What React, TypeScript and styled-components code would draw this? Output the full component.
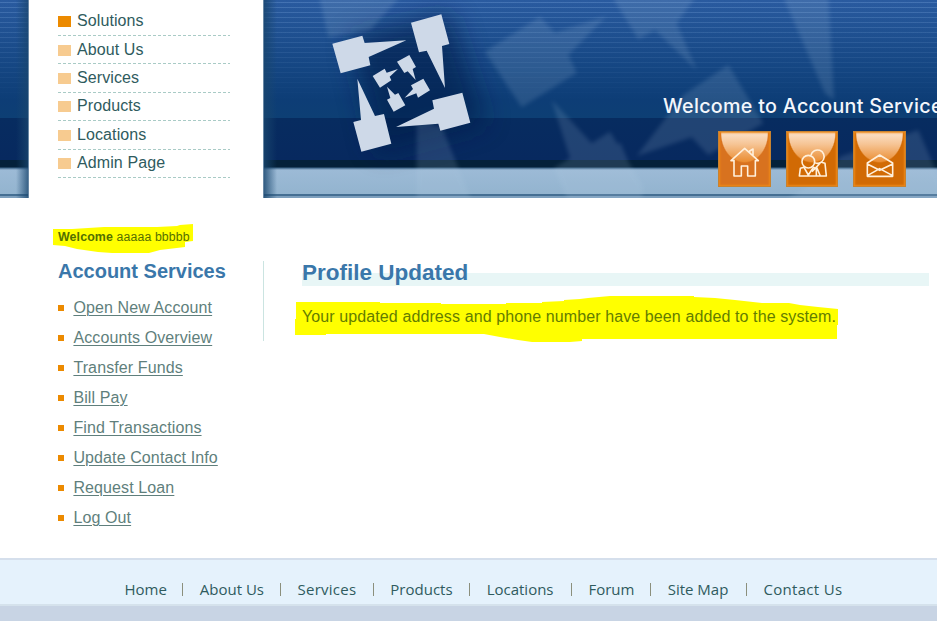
import React from "react";
import styled, { createGlobalStyle } from "styled-components";

const GlobalStyle = createGlobalStyle`
  body {
    margin: 0;
    background: #fff;
    font-family: "Liberation Sans", Arial, sans-serif;
    font-size: 16px;
    overflow: hidden;
  }
`;

const Page = styled.div`
  width: 937px;
  height: 621px;
  display: flex;
  flex-direction: column;
  overflow: hidden;
`;

const Header = styled.header`
  height: 198px;
  flex: none;
  display: grid;
  grid-template-columns: 29px 234px 1fr;
  background:
    linear-gradient(transparent 160px, #04213a 160px, #04213a 167px, #40688c 168px, #9cbad6 170px,
      #93b4cf 194px, #456f93 194px, #456f93 196px, #7d9fbd 196px, #7d9fbd 198px),
    linear-gradient(transparent 118px, #072c60 118px, #07295f 160px, transparent 160px),
    linear-gradient(rgba(13, 61, 118, 0), #0d3d76 100px, #0d3f74 118px, transparent 118px),
    repeating-linear-gradient(transparent 0 2px, rgba(150, 190, 240, 0.25) 2px 3px, transparent 3px 5px),
    linear-gradient(#2a5ba0, #215698 118px);
`;

const Edge = styled.div`
  background: linear-gradient(to right, transparent 16px, rgba(25, 70, 110, 0.75) 28px, #6988a5 28px);
`;

const NavPanel = styled.nav`
  background: #fff;
  padding: 7.6px 33px 0 29px;
`;

const NavItem = styled.a`
  display: flex;
  align-items: center;
  gap: 6px;
  box-sizing: border-box;
  height: 28.4px;
  padding-bottom: 1px;
  letter-spacing: 0.1px;
  color: #2f5b5e;
  background: repeating-linear-gradient(to right, #a9cbc6 0 3px, transparent 3px 5px) bottom / 100% 1px no-repeat;
`;

const NavBullet = styled.span<{ $active?: boolean }>`
  width: 13px;
  height: 11px;
  margin-top: 1px;
  background: ${(p) => (p.$active ? "#ec8a00" : "#f7cb90")};
`;

const Banner = styled.section`
  position: relative;
  display: flex;
  flex-direction: column;
  padding: 93px 0 0 400px;
  overflow: hidden;
  background: linear-gradient(to right, #6988a5 1px, rgba(25, 70, 110, 0.8) 1px, transparent 14px);
`;

const BannerArt = styled.svg`
  position: absolute;
  inset: 0;
`;

const BannerTitle = styled.div`
  position: relative;
  height: 38px;
  font: 500 19.7px/26px Inter, sans-serif;
  letter-spacing: 0.3px;
  color: #f4f7fc;
  white-space: nowrap;
`;

const Tiles = styled.div`
  position: relative;
  display: flex;
  gap: 15px;
  padding-left: 55px;
`;

const Tile = styled.a<{ $warm?: boolean; $narrow?: boolean }>`
  width: ${(p) => (p.$narrow ? 52 : 53)}px;
  height: 56px;
  box-sizing: border-box;
  border: 1px solid #c8822f;
  overflow: hidden;
  background:
    radial-gradient(ellipse 24px 30px at 50% 1px, transparent 95%, ${(p) => (p.$warm ? "#d8721f" : "#d16a04")} 100%),
    linear-gradient(#fbe3cc, #f6c596 12px, #ea8c30 30px);
  box-shadow: inset 0 0 2px 1px #ee8818;

  svg {
    display: block;
  }
`;

const Body = styled.div`
  height: 360px;
  flex: none;
  display: grid;
  grid-template-columns: 263px 1fr;
`;

const Sidebar = styled.aside`
  padding: 29px 0 0 58px;
`;

const Marker = styled.svg`
  position: absolute;
  z-index: -1;
`;

const Greeting = styled.p`
  position: relative;
  z-index: 0;
  margin: 0;
  height: 32px;
  font-size: 12.3px;
  letter-spacing: 0.12px;
  line-height: 20px;
  color: #566f00;
  white-space: nowrap;

  b {
    color: #537000;
    font-size: 12.4px;
  }
  ${Marker} {
    left: -6px;
    top: -3px;
  }
`;

const SideHeading = styled.h2`
  margin: 0;
  font-size: 20px;
  line-height: 24px;
  height: 34px;
  color: #3a77aa;
`;

const ServiceItem = styled.div`
  display: flex;
  align-items: center;
  height: 30px;
  gap: 9.4px;
`;

const ServiceBullet = styled.span`
  width: 6px;
  height: 6px;
  margin-bottom: 1px;
  background: #ec8a00;
`;

const ServiceLink = styled.a`
  color: #5f7f7c;
  letter-spacing: 0.11px;
  text-decoration: underline;
  text-underline-offset: 2px;
  text-decoration-thickness: 1px;
`;

const Main = styled.main`
  padding: 63px 8px 0 0;
  display: grid;
  grid-template-columns: 39px 1fr;
  align-items: start;
`;

const Divider = styled.div`
  width: 1px;
  height: 80px;
  background: #cbe4e1;
`;

const Title = styled.h1`
  margin: 0;
  height: 41px;
  font-size: 22.5px;
  line-height: 23px;
  color: #3a77aa;
  background: linear-gradient(#e8f6f6, #e8f6f6) 0 12px / 100% 13px no-repeat;
`;

const Message = styled.p`
  position: relative;
  z-index: 0;
  margin: 0;
  line-height: 30px;
  letter-spacing: 0.105px;
  color: #647d00;
  white-space: nowrap;

  ${Marker} {
    left: -7px;
    top: -7px;
  }
`;

const Footer = styled.footer`
  flex: 1;
  box-sizing: border-box;
  border-top: 2px solid #d5dfec;
  background: linear-gradient(#e5f2fc 44px, #d5e2ec 44px, #d5e2ec 46px, #c8d4e4 46px);
`;

const FooterNav = styled.nav`
  display: flex;
  align-items: center;
  gap: 16.4px;
  height: 22px;
  padding: 18px 0 0 124.5px;
  font: 15px/22px "Open Sans", sans-serif;
  color: #2f5b5e;
`;

const FooterLink = styled.a<{ $width: number }>`
  flex: none;
  width: ${(p) => p.$width}px;
  letter-spacing: ${(p) => (p.$width > 75 ? 0.3 : p.$width === 59 ? 0.25 : 0)}px;
  white-space: nowrap;
`;

const FooterBar = styled.span`
  width: 1px;
  height: 13px;
  margin-top: 1px;
  background: #8b8f7c;
`;

const navItems = ["Solutions", "About Us", "Services", "Products", "Locations", "Admin Page"];
const services = [
  "Open New Account",
  "Accounts Overview",
  "Transfer Funds",
  "Bill Pay",
  "Find Transactions",
  "Update Contact Info",
  "Request Loan",
  "Log Out",
];
const footerItems: [string, number][] = [
  ["Home", 41.5],
  ["About Us", 64],
  ["Services", 59],
  ["Products", 62.5],
  ["Locations", 68],
  ["Forum", 45.5],
  ["Site Map", 62],
  ["Contact Us", 79],
];

const emblem = [
  "217,131 307,107 314,129 439,121 326,171 331,196 242,220",
  "453,68 544,43 568,132 546,138 555,264 500,152 477,157",
  "517,301 607,278 631,368 541,392 535,371 408,381 522,326",
  "292,236 345,348 372,342 394,431 304,455 280,366 303,360",
  "338,228 374,206 380,218 414,207 389,230 394,241 360,263",
  "411,185 448,165 468,201 458,207 467,240 443,214 433,219",
  "453,256 490,236 510,271 474,293 469,280 434,293 459,267",
  "381,260 405,284 415,279 436,316 401,335 381,299 391,294",
];

const ghosts = [
  "175,-20 430,-20 330,90 205,112",
  "470,360 545,380 640,614 470,614",
  "675,155 840,50 885,98 1040,48 925,165 950,218 785,322",
  "1050,-20 1135,118 1185,90 1310,210 1250,70 1315,-20",
  "1130,468 1270,285 1405,195 1510,370 1345,465 1295,412",
  "875,300 995,430 1050,395 1150,560 1140,614 930,614 882,505 930,475",
  "1565,-20 1705,-20 1722,300 1695,280",
  "1080,425 1150,594 1080,594 1040,500",
  "1740,470 1975,390 2040,540 2040,614 1560,614 1700,520",
];

function Art() {
  return (
    <BannerArt width="674" height="198" viewBox="263 0 674 198">
      <defs>
        <filter id="soft" x="-20%" y="-20%" width="140%" height="140%">
          <feGaussianBlur stdDeviation="7" />
        </filter>
        <filter id="shade" x="-50%" y="-50%" width="200%" height="200%">
          <feGaussianBlur stdDeviation="38" />
        </filter>
      </defs>
      <g transform="translate(260 0) scale(.33333)">
        <path d="M270 110L570 40L680 370L350 460Z" fill="#031f48" opacity=".62" filter="url(#shade)" />
        <g fill="#b7d0e5" opacity=".15" filter="url(#soft)">
          {ghosts.map((p) => (
            <polygon key={p} points={p} />
          ))}
        </g>
        <g fill="#ced9e8">
          {emblem.map((p) => (
            <polygon key={p} points={p} />
          ))}
        </g>
      </g>
    </BannerArt>
  );
}

const line = { fill: "none", stroke: "#fff0dc", strokeWidth: 4.8, strokeLinejoin: "round" as const };

function HomeIcon() {
  return (
    <svg width="51" height="54" viewBox="3 3 153 162">
      <path {...line} d="M48 89H39L80 52L121 89H112V135H89V105H70V135H48V86M95 64V60L105 54V74" />
    </svg>
  );
}

function PeopleIcon() {
  return (
    <svg width="50" height="54" viewBox="3 3 150 162">
      <g {...line}>
        <circle cx="67" cy="92" r="19" />
        <path d="M75 72A20 20 0 1 1 84 94M40 135L43 112L54 109L67 132L82 109L91 113V135ZM91 135H121L117 97L106 94M103 96L78 122M92 109L103 135" />
      </g>
    </svg>
  );
}

function MailIcon() {
  return (
    <svg width="51" height="54" viewBox="3 3 153 162">
      <path {...line} d="M43 96L80 72L119 96V136H43ZM43 99L80 118L119 99M43 134L80 113L119 134" />
    </svg>
  );
}

export default function App() {
  return (
    <Page>
      <GlobalStyle />
      <Header>
        <Edge />
        <NavPanel>
          {navItems.map((label, i) => (
            <NavItem key={label}>
              <NavBullet $active={i === 0} />
              {label}
            </NavItem>
          ))}
        </NavPanel>
        <Banner>
          <Art />
          <BannerTitle>Welcome to Account Services</BannerTitle>
          <Tiles>
            <Tile $warm>
              <HomeIcon />
            </Tile>
            <Tile $narrow>
              <PeopleIcon />
            </Tile>
            <Tile>
              <MailIcon />
            </Tile>
          </Tiles>
        </Banner>
      </Header>
      <Body>
        <Sidebar>
          <Greeting>
            <Marker width="142" height="30" viewBox="0 0 142 30">
              <path
                fill="#ff0"
                d="M1 5L20 5L52 3L105 3L125 2L128 1L141 0V17L133 18V23L108 26L97 29L60 29L46 28L25 25L13 22L1 21Z"
              />
            </Marker>
            <b>Welcome</b> aaaaa bbbbb
          </Greeting>
          <SideHeading>Account Services</SideHeading>
          {services.map((label) => (
            <ServiceItem key={label}>
              <ServiceBullet />
              <ServiceLink>{label}</ServiceLink>
            </ServiceItem>
          ))}
        </Sidebar>
        <Main>
          <Divider />
          <div>
            <Title>Profile Updated</Title>
            <Message>
              <Marker width="544" height="48" viewBox="295 295 544 48">
                <path
                  fill="#ff0"
                  d="M296 302H380V303H441V304H506V303H542V302L564 301V300L580 299L588 298L610 296H694V297L715 298L735 300L762 303L789 303L800 305L818 307L838 309V325H837V339H582V341L570 342H532L518 340L500 337L484 334H326V335H295V319H296Z"
                />
              </Marker>
              Your updated address and phone number have been added to the system.
            </Message>
          </div>
        </Main>
      </Body>
      <Footer>
        <FooterNav>
          {footerItems.map(([label, width], i) => (
            <React.Fragment key={label}>
              {i > 0 && <FooterBar />}
              <FooterLink $width={width}>{label}</FooterLink>
            </React.Fragment>
          ))}
        </FooterNav>
      </Footer>
    </Page>
  );
}
